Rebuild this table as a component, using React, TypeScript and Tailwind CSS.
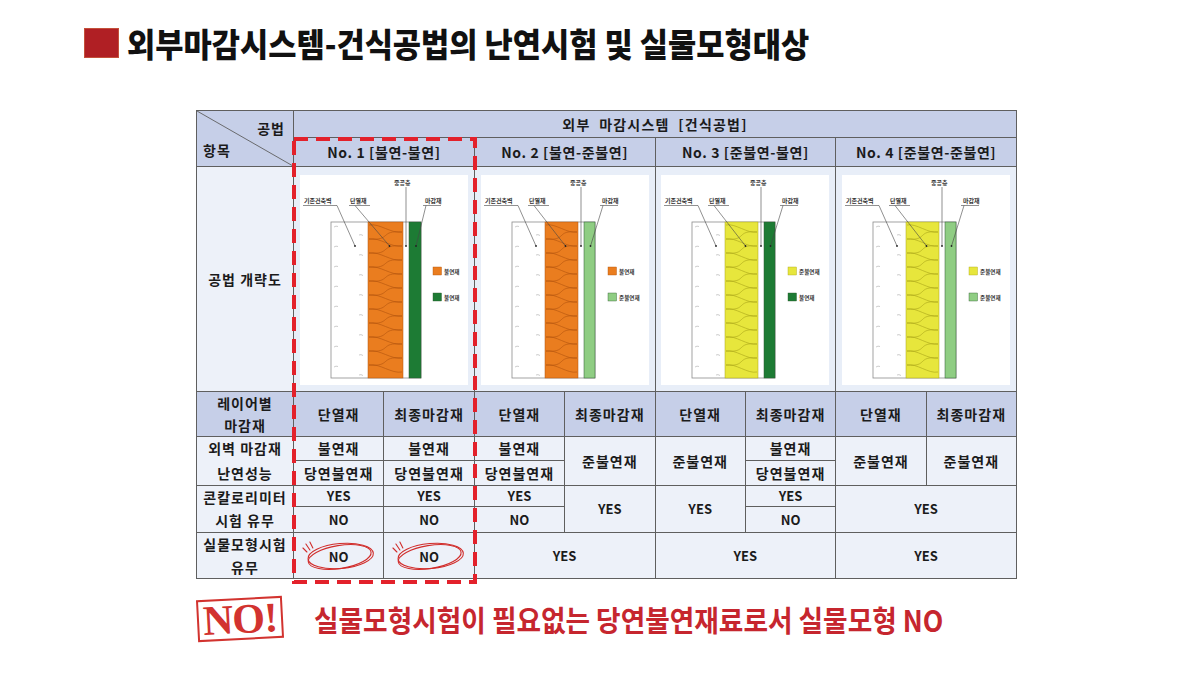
import clsx from 'clsx';
import type { ReactNode } from 'react';

type Geo = {
  wall: number;
  ins: number;
  insEnd: number;
  fin: number;
  finEnd: number;
  leg: number;
  lab2: number;
  lab3: number;
  lab4: number;
};

const WIDE: Geo = { wall: 31, ins: 68, insEnd: 103, fin: 109, finEnd: 121, leg: 133, lab2: 50, lab3: 125, lab4: 94 };
const NARROW: Geo = { wall: 31, ins: 64, insEnd: 97, fin: 103, finEnd: 114, leg: 127, lab2: 48, lab3: 121, lab4: 89 };

const ORANGE = { fill: '#ea7d1f', line: '#b0530d' };
const YELLOW = { fill: '#e7e63c', line: '#a8a318' };
const DARK_GREEN = '#1d7b34';
const LIGHT_GREEN = '#8fcd83';

const SVG_FONT = '"Noto Sans CJK KR", "Noto Sans", sans-serif';

type DiagramProps = {
  geo: Geo;
  ins: { fill: string; line: string };
  finish: string;
  legends: [string, string];
};

function Diagram({ geo, ins, finish, legends }: DiagramProps) {
  const top = 47;
  const bottom = 203;
  const l = geo.ins + 1;
  const r = geo.insEnd - 1;
  const mid = (l + r) / 2;
  // one continuous zig-zag with rounded turns, like the batting in the drawing
  let wave = `M${l} ${top + 3}`;
  let y = top + 3;
  let toRight = true;
  while (y < bottom - 10) {
    const ny = y + 7;
    const x = toRight ? r : l;
    wave += ` C${mid - 6} ${y - 2} ${mid + 6} ${ny + 2} ${x} ${ny}`;
    toRight = !toRight;
    y = ny;
  }
  const marks: string[] = [];
  for (let i = 0; i < 8; i++) {
    const yl = 52 + i * 20;
    const yr = 60 + i * 20;
    marks.push(`M${geo.wall + 3} ${yl} q2 -1.5 4 -0.5`);
    marks.push(`M${geo.ins - 9} ${yr} q2 -1 4 0.5`);
  }
  const insMid = (geo.ins + geo.insEnd) / 2;
  const gapMid = (geo.insEnd + geo.fin) / 2;
  const finMid = (geo.fin + geo.finEnd) / 2;

  return (
    <svg width="168" height="210" viewBox="0 0 168 210">
      <rect x={geo.wall} y={top} width={geo.finEnd - geo.wall} height={bottom - top} fill="#fff" stroke="#8c8c8c" strokeWidth="0.8" />
      {marks.map((d, i) => (
        <path key={i} d={d} fill="none" stroke="#a9a9a9" strokeWidth="0.6" />
      ))}
      <rect x={geo.ins} y={top} width={geo.insEnd - geo.ins} height={bottom - top} fill={ins.fill} stroke={ins.line} strokeWidth="0.5" />
      <path d={wave} fill="none" stroke={ins.line} strokeWidth="0.6" />
      <rect x={geo.fin} y={top} width={geo.finEnd - geo.fin} height={bottom - top} fill={finish} stroke="#2d5a30" strokeWidth="0.5" />

      <g fontFamily={SVG_FONT} fontSize="6" fontWeight="700" fill="#333">
        <text x="4" y="28">기존건축벽</text>
        <text x={geo.lab2} y="28">단열재</text>
        <text x={geo.lab3} y="28">마감재</text>
        <text x={geo.lab4} y="10">중공층</text>
      </g>
      <g stroke="#444" strokeWidth="0.6" fill="none">
        <path d={`M3 30.5 H${geo.wall + 6} L${geo.wall + 24} 71`} />
        <path d={`M${geo.lab2 - 1} 30.5 H${geo.lab2 + 20} M${geo.lab2 + 5} 30.5 L${insMid + 4} 71`} />
        <path d={`M${geo.lab3 - 2} 30.5 H${geo.lab3 + 16} M${geo.lab3 + 1} 30.5 L${finMid + 1} 71`} />
        <path d={`M${gapMid} 12 V71`} />
      </g>
      <g fill="#222">
        <circle cx={geo.wall + 24} cy="71" r="0.9" />
        <circle cx={insMid + 4} cy="71" r="0.9" />
        <circle cx={finMid + 1} cy="71" r="0.9" />
        <circle cx={gapMid} cy="71" r="0.9" />
      </g>

      <rect x={geo.leg} y="92" width="8.5" height="8" fill={ins.fill} stroke={ins.line} strokeWidth="0.4" />
      <rect x={geo.leg} y="118" width="8.5" height="8" fill={finish} stroke="#2d5a30" strokeWidth="0.4" />
      <g fontFamily={SVG_FONT} fontSize="5.6" fontWeight="700" fill="#333">
        <text x={geo.leg + 11} y="98.5">{legends[0]}</text>
        <text x={geo.leg + 11} y="124.5">{legends[1]}</text>
      </g>
    </svg>
  );
}

const BLUE = 'bg-[#c6cfe8]';
const LIGHT = 'bg-[#edf1f9]';

function Cell({ className, children }: { className?: string; children?: ReactNode }) {
  return <div className={clsx('flex items-center justify-center text-center', className)}>{children}</div>;
}

function CircledNo({ className }: { className: string }) {
  return (
    <Cell className={clsx(LIGHT, 'relative row-start-9 text-[13px]', className)}>
      <span className="relative top-[1px]">NO</span>
      <svg className="absolute inset-0" width="100%" height="100%" viewBox="0 0 90 45" preserveAspectRatio="none">
        <g fill="none" stroke="#d12c2a" strokeWidth="1.1" strokeLinecap="round">
          <ellipse cx="47" cy="23" rx="33" ry="12.5" transform="rotate(-5 47 23)" />
          <ellipse cx="46" cy="24" rx="32" ry="11.5" transform="rotate(-9 46 24)" />
          <path d="M9 15 L13 19" />
          <path d="M12 11 L16 17" />
          <path d="M16 9 L19 15" />
        </g>
      </svg>
    </Cell>
  );
}

function DiagramCell({ className, children }: { className: string; children: ReactNode }) {
  return (
    <div className={clsx('col-span-2 row-start-3 flex justify-center bg-[#e8eef8] pt-[8px]', className)}>
      <div className="h-[210px] w-[168px] bg-white">{children}</div>
    </div>
  );
}

export default function App() {
  return (
    <div className="h-[685px] w-[1200px] overflow-hidden bg-white font-['Noto_Sans_CJK_KR','Noto_Sans',sans-serif]">
      <div className="flex items-center pl-[84px] pt-[27px]">
        <div className="h-[30px] w-[35px] border border-[#c4503a] bg-[#b01f24]" />
        <div className="ml-[8px] h-[32px] w-[700px]">
          <span className="inline-block origin-left scale-x-[0.93] whitespace-nowrap text-[33px] font-black leading-none text-[#111]">
            외부마감시스템-건식공법의 난연시험 및 실물모형대상
          </span>
        </div>
      </div>

      <div className="relative ml-[196px] mt-[51px] grid w-[821px] grid-cols-[96px_repeat(8,minmax(0,1fr))] grid-rows-[26px_28px_224px_44px_23px_24px_20px_25px_45px] gap-px border border-[#5f5f5f] bg-[#5f5f5f] text-[14px] font-bold text-[#1b1b1b]">
        <div className={clsx(BLUE, 'relative col-start-1 row-span-2 row-start-1')}>
          <svg className="absolute inset-0" width="100%" height="100%" viewBox="0 0 96 55" preserveAspectRatio="none">
            <line x1="0" y1="0" x2="96" y2="55" stroke="#5f5f5f" strokeWidth="0.9" />
          </svg>
          <span className="absolute right-[8px] top-[7px] tracking-[1px]">공법</span>
          <span className="absolute left-[6px] top-[29px] tracking-[1px]">항목</span>
        </div>
        <Cell className={clsx(BLUE, 'col-span-8 col-start-2 row-start-1 tracking-[1.2px]')}>
          외부&nbsp; 마감시스템&nbsp; [건식공법]
        </Cell>
        <Cell className={clsx(BLUE, 'col-span-2 col-start-2 row-start-2 tracking-[0.6px]')}>No. 1 [불연-불연]</Cell>
        <Cell className={clsx(BLUE, 'col-span-2 col-start-4 row-start-2 tracking-[0.6px]')}>No. 2 [불연-준불연]</Cell>
        <Cell className={clsx(BLUE, 'col-span-2 col-start-6 row-start-2 tracking-[0.6px]')}>No. 3 [준불연-불연]</Cell>
        <Cell className={clsx(BLUE, 'col-span-2 col-start-8 row-start-2 tracking-[0.6px]')}>No. 4 [준불연-준불연]</Cell>

        <Cell className={clsx(LIGHT, 'col-start-1 row-start-3 tracking-[1px]')}>공법 개략도</Cell>
        <DiagramCell className="col-start-2">
          <Diagram geo={WIDE} ins={ORANGE} finish={DARK_GREEN} legends={['불연재', '불연재']} />
        </DiagramCell>
        <DiagramCell className="col-start-4">
          <Diagram geo={NARROW} ins={ORANGE} finish={LIGHT_GREEN} legends={['불연재', '준불연재']} />
        </DiagramCell>
        <DiagramCell className="col-start-6">
          <Diagram geo={NARROW} ins={YELLOW} finish={DARK_GREEN} legends={['준불연재', '불연재']} />
        </DiagramCell>
        <DiagramCell className="col-start-8">
          <Diagram geo={NARROW} ins={YELLOW} finish={LIGHT_GREEN} legends={['준불연재', '준불연재']} />
        </DiagramCell>

        <Cell className={clsx(BLUE, 'col-start-1 row-start-4 leading-[22px] tracking-[1px]')}>
          레이어별
          <br />
          마감재
        </Cell>
        <Cell className={clsx(BLUE, 'col-start-2 row-start-4 tracking-[1px]')}>단열재</Cell>
        <Cell className={clsx(BLUE, 'col-start-3 row-start-4 tracking-[1px]')}>최종마감재</Cell>
        <Cell className={clsx(BLUE, 'col-start-4 row-start-4 tracking-[1px]')}>단열재</Cell>
        <Cell className={clsx(BLUE, 'col-start-5 row-start-4 tracking-[1px]')}>최종마감재</Cell>
        <Cell className={clsx(BLUE, 'col-start-6 row-start-4 tracking-[1px]')}>단열재</Cell>
        <Cell className={clsx(BLUE, 'col-start-7 row-start-4 tracking-[1px]')}>최종마감재</Cell>
        <Cell className={clsx(BLUE, 'col-start-8 row-start-4 tracking-[1px]')}>단열재</Cell>
        <Cell className={clsx(BLUE, 'col-start-9 row-start-4 tracking-[1px]')}>최종마감재</Cell>

        <Cell className={clsx(LIGHT, 'col-start-1 row-span-2 row-start-5 leading-[25px] tracking-[1px]')}>
          외벽 마감재
          <br />
          난연성능
        </Cell>
        <Cell className={clsx(LIGHT, 'col-start-2 row-start-5 tracking-[1px]')}>불연재</Cell>
        <Cell className={clsx(LIGHT, 'col-start-2 row-start-6 tracking-[1px]')}>당연불연재</Cell>
        <Cell className={clsx(LIGHT, 'col-start-3 row-start-5 tracking-[1px]')}>불연재</Cell>
        <Cell className={clsx(LIGHT, 'col-start-3 row-start-6 tracking-[1px]')}>당연불연재</Cell>
        <Cell className={clsx(LIGHT, 'col-start-4 row-start-5 tracking-[1px]')}>불연재</Cell>
        <Cell className={clsx(LIGHT, 'col-start-4 row-start-6 tracking-[1px]')}>당연불연재</Cell>
        <Cell className={clsx(LIGHT, 'col-start-5 row-span-2 row-start-5 tracking-[1px]')}>준불연재</Cell>
        <Cell className={clsx(LIGHT, 'col-start-6 row-span-2 row-start-5 tracking-[1px]')}>준불연재</Cell>
        <Cell className={clsx(LIGHT, 'col-start-7 row-start-5 tracking-[1px]')}>불연재</Cell>
        <Cell className={clsx(LIGHT, 'col-start-7 row-start-6 tracking-[1px]')}>당연불연재</Cell>
        <Cell className={clsx(LIGHT, 'col-start-8 row-span-2 row-start-5 tracking-[1px]')}>준불연재</Cell>
        <Cell className={clsx(LIGHT, 'col-start-9 row-span-2 row-start-5 tracking-[1px]')}>준불연재</Cell>

        <Cell className={clsx(LIGHT, 'col-start-1 row-span-2 row-start-7 leading-[23px] tracking-[1px]')}>
          콘칼로리미터
          <br />
          시험 유무
        </Cell>
        <Cell className={clsx(LIGHT, 'col-start-2 row-start-7 text-[13px]')}>YES</Cell>
        <Cell className={clsx(LIGHT, 'col-start-2 row-start-8 text-[13px]')}>NO</Cell>
        <Cell className={clsx(LIGHT, 'col-start-3 row-start-7 text-[13px]')}>YES</Cell>
        <Cell className={clsx(LIGHT, 'col-start-3 row-start-8 text-[13px]')}>NO</Cell>
        <Cell className={clsx(LIGHT, 'col-start-4 row-start-7 text-[13px]')}>YES</Cell>
        <Cell className={clsx(LIGHT, 'col-start-4 row-start-8 text-[13px]')}>NO</Cell>
        <Cell className={clsx(LIGHT, 'col-start-5 row-span-2 row-start-7 text-[13px]')}>YES</Cell>
        <Cell className={clsx(LIGHT, 'col-start-6 row-span-2 row-start-7 text-[13px]')}>YES</Cell>
        <Cell className={clsx(LIGHT, 'col-start-7 row-start-7 text-[13px]')}>YES</Cell>
        <Cell className={clsx(LIGHT, 'col-start-7 row-start-8 text-[13px]')}>NO</Cell>
        <Cell className={clsx(LIGHT, 'col-span-2 col-start-8 row-span-2 row-start-7 text-[13px]')}>YES</Cell>

        <Cell className={clsx(LIGHT, 'col-start-1 row-start-9 leading-[23px] tracking-[1px]')}>
          실물모형시험
          <br />
          유무
        </Cell>
        <CircledNo className="col-start-2" />
        <CircledNo className="col-start-3" />
        <Cell className={clsx(LIGHT, 'col-span-2 col-start-4 row-start-9 text-[13px]')}>YES</Cell>
        <Cell className={clsx(LIGHT, 'col-span-2 col-start-6 row-start-9 text-[13px]')}>YES</Cell>
        <Cell className={clsx(LIGHT, 'col-span-2 col-start-8 row-start-9 text-[13px]')}>YES</Cell>

        <svg className="pointer-events-none absolute left-[95px] top-[26px]" width="185" height="447" viewBox="0 0 185 447">
          <rect x="2" y="2" width="181" height="443" fill="none" stroke="#e3212b" strokeWidth="4" strokeDasharray="14 8" />
        </svg>
      </div>

      <div className="ml-[197px] mt-[18px] flex h-[44px] items-center">
        <div className="-rotate-3 flex h-[42px] w-[86px] items-center justify-center border-2 border-[#d2332f]">
          <span className="font-['Liberation_Serif',serif] text-[42px] font-bold leading-none tracking-[-1px] text-[#d2332f]">NO!</span>
        </div>
        <div className="ml-[31px] h-[30px] w-[700px] pt-[1px]">
          <span className="inline-block origin-left scale-x-[0.92] whitespace-nowrap text-[29px] font-bold leading-none text-[#c6262e]">
            실물모형시험이 필요없는 당연불연재료로서 실물모형 NO
          </span>
        </div>
      </div>
    </div>
  );
}
